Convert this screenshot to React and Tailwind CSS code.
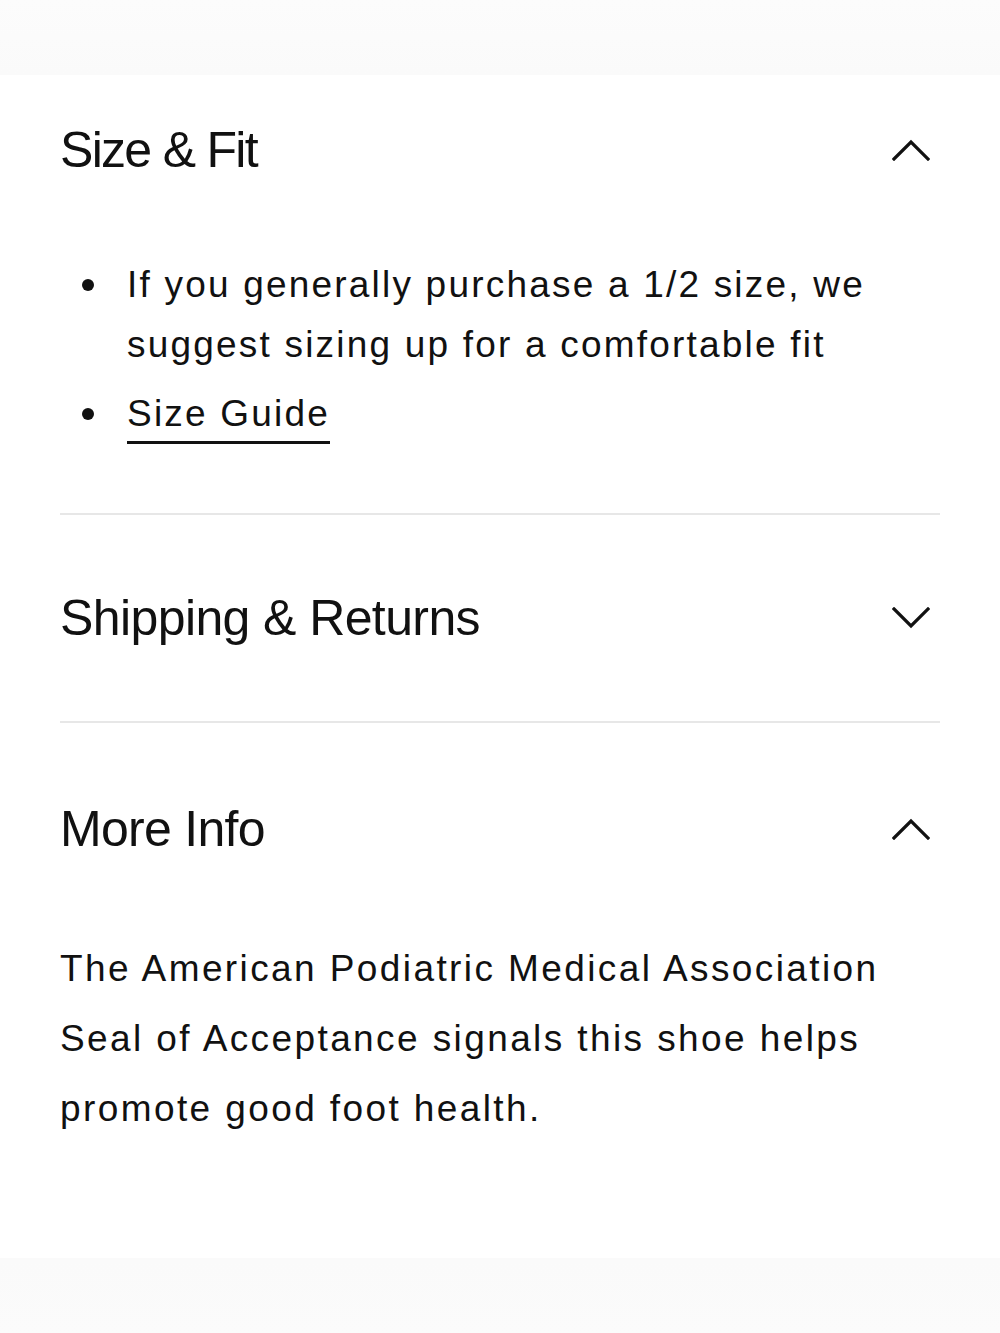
import React, { useState } from "react";

const FONT = { fontFamily: '"Liberation Sans", Arial, sans-serif' };

// chevron drawn to match the thin 3px strokes in the picture
const Chevron = ({ open }) => (
  <svg width="38" height="22" viewBox="0 0 38 22" fill="none" className="mr-[10px]">
    {open ? (
      <path d="M2 20 L19 3 L36 20" stroke="#111" strokeWidth="3.2" strokeLinecap="square" />
    ) : (
      <path d="M2 2 L19 19 L36 2" stroke="#111" strokeWidth="3.2" strokeLinecap="square" />
    )}
  </svg>
);

const Bullet = ({ children }) => (
  <li className="flex">
    <div className="w-[67px] shrink-0 h-[60px] flex items-center pl-[22px]">
      <span className="block w-[12px] h-[12px] rounded-full bg-[#111]" />
    </div>
    <div className="flex-1">{children}</div>
  </li>
);

const App = () => {
  const [open, setOpen] = useState({ size: true, shipping: false, info: true });
  const toggle = (k) => setOpen({ ...open, [k]: !open[k] });

  return (
    <div className="w-[1000px] min-h-[1333px] bg-white flex flex-col text-[#111]" style={FONT}>
      {/* top fade band */}
      <div className="h-[75px] bg-gradient-to-b from-[#fcfcfc] to-[#fafafa]" />

      <div className="px-[60px] flex-1">
        {/* Size & Fit */}
        <div className="border-b-2 border-[#e7e7e7]">
          <button
            type="button"
            onClick={() => toggle("size")}
            className="w-full h-[150px] flex items-center justify-between"
          >
            <span className="text-[50px] tracking-[-1.7px] leading-none">Size &amp; Fit</span>
            <Chevron open={open.size} />
          </button>
          {open.size && (
            <ul className="pt-[30px] pb-[69px] text-[37px] leading-[60px] tracking-[2.2px] flex flex-col gap-[9px]">
              <Bullet>
                If you generally purchase a 1/2 size, we suggest sizing up for a comfortable fit
              </Bullet>
              <Bullet>
                <a
                  href="#"
                  className="underline decoration-[3px] underline-offset-[15px]"
                >
                  Size Guide
                </a>
              </Bullet>
            </ul>
          )}
        </div>

        {/* Shipping & Returns */}
        <div className="border-b-2 border-[#e7e7e7]">
          <button
            type="button"
            onClick={() => toggle("shipping")}
            className="w-full h-[206px] flex items-center justify-between"
          >
            <span className="text-[50px] tracking-[-0.6px] leading-none">Shipping &amp; Returns</span>
            <Chevron open={open.shipping} />
          </button>
        </div>

        {/* More Info */}
        <div>
          <button
            type="button"
            onClick={() => toggle("info")}
            className="w-full h-[211px] flex items-center justify-between"
          >
            <span className="text-[50px] tracking-[-0.7px] leading-none">More Info</span>
            <Chevron open={open.info} />
          </button>
          {open.info && (
            <p className="text-[37px] leading-[70px] tracking-[2.4px] pr-[20px]">
              The American Podiatric Medical Association Seal of Acceptance signals this shoe helps
              promote good foot health.
            </p>
          )}
        </div>
      </div>

      {/* bottom fade band */}
      <div className="h-[75px] bg-gradient-to-b from-[#fafafa] to-[#fbfbfb]" />
    </div>
  );
};

export default App;
